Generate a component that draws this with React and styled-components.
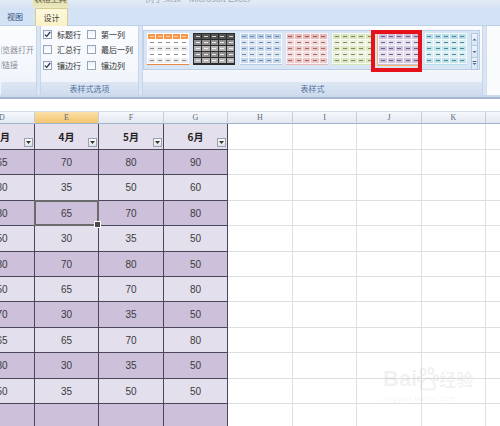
import React from "react";
import styled, { createGlobalStyle, css } from "styled-components";

const CJK = `"Noto Sans CJK SC", "Noto Sans", sans-serif`;
const LATIN = `"Liberation Sans", "Noto Sans CJK SC", sans-serif`;

const GlobalStyle = createGlobalStyle`
  html, body { margin: 0; padding: 0; background: #ffffff; }
  body { font-family: ${CJK}; }
  * { box-sizing: border-box; }
`;

const Page = styled.div`
  position: relative;
  width: 500px;
  height: 426px;
  overflow: hidden;
  display: flex;
  flex-direction: column;
  background: #ffffff;
`;

/* ---------- title bar + tabs ---------- */
const TitleBar = styled.div`
  flex: none;
  height: 8px;
  display: flex;
  overflow: hidden;
  background: linear-gradient(#e3ecf7, #d6e3f3);
`;

const ContextHead = styled.div`
  flex: none;
  margin-left: 33px;
  width: 35px;
  background: linear-gradient(#e2ddac, #eee8bf);
  color: #5a5946;
  font-size: 8px;
  line-height: 8px;
  text-align: center;
  white-space: nowrap;
  span {
    display: block;
    margin-top: -5px;
  }
`;

const TitleText = styled.div`
  margin: -5px 0 0 77px;
  font-family: ${LATIN};
  font-size: 9px;
  line-height: 9px;
  color: #9aa5b3;
  white-space: nowrap;
`;

const TabRow = styled.div`
  flex: none;
  height: 17px;
  display: flex;
  align-items: flex-end;
  gap: 5px;
  background: #d3e2f5;
`;

const Tab = styled.div`
  width: ${(p) => p.$w}px;
  height: 17px;
  font-size: 8px;
  line-height: 17px;
  text-align: center;
  color: #2f4d7c;
  ${(p) =>
    p.$active &&
    css`
      position: relative;
      z-index: 1;
      height: 18px;
      margin-bottom: -1px;
      color: #3a3a3a;
      background: linear-gradient(#fdf8dc, #faf1c9);
      border: 1px solid #d6cb95;
      border-bottom: none;
      border-radius: 2px 2px 0 0;
    `}
`;

/* ---------- ribbon ---------- */
const Ribbon = styled.div`
  flex: none;
  height: 70px;
  display: flex;
  gap: 3px;
  background: #d9e5f4;
  border-top: 1px solid #bcd0e8;
`;

const Group = styled.div`
  flex: none;
  width: ${(p) => p.$w}px;
  display: flex;
  flex-direction: column;
  overflow: hidden;
  background: linear-gradient(#fbfcfe, #eef3fa);
  border-left: 1px solid ${(p) => (p.$open ? "transparent" : "#c6d6ea")};
  border-right: 1px solid #c6d6ea;
`;

const GroupBody = styled.div`
  flex: 1;
  min-height: 0;
`;

const GroupLabel = styled.div`
  flex: none;
  height: 13px;
  font-size: 8px;
  line-height: 13px;
  text-align: center;
  color: #51709d;
  background: linear-gradient(#dde7f4, #cfdcee);
`;

const LinkList = styled.div`
  display: grid;
  grid-template-rows: 16px 15px 16px;
  margin-left: -15px;
`;

const LinkItem = styled.div`
  font-size: 8px;
  line-height: 15px;
  white-space: nowrap;
  color: #8a8e95;
`;

const OptionGrid = styled.div`
  display: grid;
  grid-template-columns: 44px 1fr;
  grid-template-rows: 16px 15px 16px;
  padding-left: 2px;
`;

const Option = styled.label`
  display: flex;
  align-items: center;
  gap: 5px;
  font-size: 8px;
  color: #2e2e2e;
  white-space: nowrap;
`;

const Box = styled.span`
  flex: none;
  width: 9px;
  height: 9px;
  display: flex;
  align-items: center;
  justify-content: center;
  border: 1px solid #93a4bb;
  background: linear-gradient(#eef2f7, #ffffff);
`;

const Check = () => (
  <svg width="7" height="7" viewBox="0 0 7 7">
    <path d="M0.8 3.6 L2.7 5.4 L6.2 1" fill="none" stroke="#2a3550" strokeWidth="1.3" />
  </svg>
);

const StyleBody = styled(GroupBody)`
  padding: 4px 0 0 0;
`;

const Gallery = styled.div`
  width: 337px;
  height: 40px;
  display: flex;
  align-items: flex-start;
  gap: 4.3px;
  padding: 2px 1px 0 3px;
  background: #d8e5f5;
  border: 1px solid #bccfe6;
`;

const Thumb = styled.div`
  flex: none;
  width: 42px;
  height: 32px;
  display: grid;
  grid-template-columns: repeat(5, 1fr);
  grid-template-rows: repeat(5, 1fr);
  gap: 1px;
  padding: 1px;
  background: ${(p) => p.$t.line};
  border-bottom: 1px solid ${(p) => p.$t.frame};
  ${(p) =>
    p.$picked &&
    css`
      outline: 1px solid #f4b860;
    `}
`;

const ThumbCell = styled.div`
  display: flex;
  align-items: center;
  justify-content: center;
  background: ${(p) => p.$bg};
  &::after {
    content: "";
    width: 4px;
    height: 1.5px;
    background: ${(p) => p.$dash};
  }
`;

const Slot = styled.div`
  position: relative;
  flex: none;
`;

const Picked = styled.div`
  position: absolute;
  top: -3px;
  bottom: -7px;
  left: -7px;
  right: -2px;
  border: 4px solid #e5121b;
`;

const ScrollCol = styled.div`
  margin-left: auto;
  width: 9px;
  height: 37px;
  display: flex;
  flex-direction: column;
`;

const ScrollBtn = styled.div`
  flex: 1;
  display: flex;
  align-items: center;
  justify-content: center;
  background: linear-gradient(#eef3fa, #d8e4f3);
  border: 1px solid #b4c7df;
  & + & {
    border-top: none;
  }
`;

const Tail = styled.div`
  flex: 1;
  background: #fafbfd;
  border-left: 1px solid #d2deec;
`;

const RibbonEdge = styled.div`
  flex: none;
  height: 4px;
  background: linear-gradient(#cbd9eb 0 50%, #a2b7d1 50% 100%);
`;

const FormulaGap = styled.div`
  flex: none;
  height: 13px;
  background: #ffffff;
  border-bottom: 1px solid #d3dce8;
`;

/* ---------- sheet ---------- */
const SheetView = styled.div`
  flex: 1;
  overflow: hidden;
`;

const SheetGrid = styled.div`
  display: grid;
  margin-left: -30px;
  grid-template-columns: 65px 64px 65px 64px 65px 64px 65px 64px 65px;
  grid-template-rows: 12px 26px 25px 26px 25px 26px 25px 25px 26px 25px 26px 25px 25px;
`;

const ColHead = styled.div`
  display: flex;
  align-items: center;
  justify-content: center;
  font-family: "Liberation Serif", serif;
  font-size: 8px;
  color: #5e6b7b;
  border-right: 1px solid #c4cfdd;
  border-bottom: 1px solid #9fb2ca;
  background: ${(p) =>
    p.$active ? "linear-gradient(#fae0a8, #f3c46e)" : "linear-gradient(#f5f7fb, #e3e9f1)"};
`;

const Cell = styled.div`
  position: relative;
  display: flex;
  align-items: center;
  justify-content: center;
  font-family: ${LATIN};
  font-size: 10px;
  color: #3b3b3b;
  background: ${(p) => p.$bg || "#ffffff"};
  border-right: 1px solid ${(p) => (p.$table ? "#4a4759" : "#dcdfe4")};
  border-bottom: 1px solid ${(p) => (p.$table ? "#4a4759" : "#dcdfe4")};
  ${(p) =>
    p.$selected &&
    css`
      z-index: 2;
      &::before {
        content: "";
        position: absolute;
        top: -1px;
        left: -1px;
        right: -1px;
        bottom: -1px;
        border: 2px solid #6b6b6b;
      }
      &::after {
        content: "";
        position: absolute;
        right: -3px;
        bottom: -3px;
        width: 5px;
        height: 5px;
        background: #4a4a4a;
        border: 1px solid #ffffff;
      }
    `}
`;

const MonthCell = styled(Cell)`
  font-family: ${CJK};
  font-weight: 700;
  font-size: 10px;
  color: #1e1e1e;
  padding-bottom: 1px;
`;

const DropBtn = styled.span`
  position: absolute;
  right: 1px;
  bottom: 2px;
  width: 9px;
  height: 9px;
  display: flex;
  align-items: center;
  justify-content: center;
  border: 1px solid #98a2b0;
  background: linear-gradient(#fdfdfd, #dde2e8);
`;

const Watermark = styled.div`
  position: absolute;
  left: 383px;
  top: 364px;
  display: flex;
  flex-direction: column;
  color: rgba(150, 150, 150, 0.13);
  pointer-events: none;
`;

const MarkTop = styled.div`
  display: flex;
  align-items: center;
  font-family: ${LATIN};
  font-size: 22px;
  font-weight: 700;
  line-height: 30px;
  span:last-child {
    font-family: ${CJK};
    font-size: 17px;
  }
`;

const MarkSub = styled.div`
  font-family: ${LATIN};
  font-size: 8px;
  letter-spacing: 0.5px;
`;

const themes = {
  orange: { line: "#ffffff", head: "#f79646", headDash: "#fcd5b4", a: "#ffffff", b: "#ececec", dash: "#8d8d8d", frame: "#e98a3a" },
  dark: { line: "#2c2c2c", head: "#555555", headDash: "#d6d6d6", a: "#8f8f8f", b: "#b3b3b3", dash: "#efefef", frame: "#2c2c2c" },
  blue: { line: "#f3f7fc", head: "#b8cce4", headDash: "#6e8ab0", a: "#dce6f1", b: "#c7d7eb", dash: "#6e8ab0", frame: "#b8cce4" },
  red: { line: "#fbf3f3", head: "#e6b8b7", headDash: "#9c5a58", a: "#f2dcdb", b: "#eac6c5", dash: "#a36866", frame: "#e6b8b7" },
  green: { line: "#f8fbf2", head: "#d8e4bc", headDash: "#7c8c55", a: "#ebf1de", b: "#dbe6c2", dash: "#7f8f5a", frame: "#d8e4bc" },
  purple: { line: "#f6f4f9", head: "#ccc0da", headDash: "#6e5c8a", a: "#e4dfec", b: "#cfc4dd", dash: "#6e5c8a", frame: "#ccc0da" },
  teal: { line: "#f3fafc", head: "#b7dee8", headDash: "#4f8898", a: "#daeef3", b: "#bfe2eb", dash: "#4f8898", frame: "#b7dee8" },
};

const StyleThumb = ({ theme, picked }) => {
  const t = themes[theme];
  const cells = [];
  for (let i = 0; i < 25; i++) {
    const r = Math.floor(i / 5);
    const bg = r === 0 ? t.head : r % 2 ? t.a : t.b;
    cells.push(<ThumbCell key={i} $bg={bg} $dash={r === 0 ? t.headDash : t.dash} />);
  }
  return (
    <Slot>
      <Thumb $t={t} $picked={picked}>
        {cells}
      </Thumb>
      {picked && <Picked />}
    </Slot>
  );
};

const Arrow = ({ up, bar }) => (
  <svg width="5" height="5" viewBox="0 0 5 5">
    {bar && <rect x="0.5" y="0" width="4" height="1" fill="#4c6a94" />}
    <path d={up ? "M0.5 3.5 L2.5 1.5 L4.5 3.5 Z" : "M0.5 2 L2.5 4 L4.5 2 Z"} fill="#4c6a94" />
  </svg>
);

const Caret = () => (
  <svg width="5" height="3" viewBox="0 0 5 3">
    <path d="M0 0 L5 0 L2.5 3 Z" fill="#333" />
  </svg>
);

const months = ["3月", "4月", "5月", "6月"];
const rows = [
  [65, 70, 80, 90],
  [30, 35, 50, 60],
  [80, 65, 70, 80],
  [50, 30, 35, 50],
  [80, 70, 80, 50],
  [50, 65, 70, 80],
  [70, 30, 35, 50],
  [65, 65, 70, 80],
  [80, 30, 35, 50],
  [50, 35, 50, 50],
  ["", "", "", ""],
];
const letters = ["D", "E", "F", "G", "H", "I", "J", "K", "L"];
const blanks = 5;

const App = () => {
  return (
    <Page>
      <GlobalStyle />
      <TitleBar>
        <ContextHead>
          <span>表格工具</span>
        </ContextHead>
        <TitleText>例子.xlsx - Microsoft Excel</TitleText>
      </TitleBar>

      <TabRow>
        <Tab $w={30}>视图</Tab>
        <Tab $w={33} $active>
          设计
        </Tab>
      </TabRow>

      <Ribbon>
        <Group $w={37} $open>
          <GroupBody>
            <LinkList>
              <LinkItem />
              <LinkItem>用浏览器打开</LinkItem>
              <LinkItem>取消链接</LinkItem>
            </LinkList>
          </GroupBody>
          <GroupLabel />
        </Group>

        <Group $w={99}>
          <GroupBody>
            <OptionGrid>
              <Option>
                <Box>
                  <Check />
                </Box>
                标题行
              </Option>
              <Option>
                <Box />
                第一列
              </Option>
              <Option>
                <Box />
                汇总行
              </Option>
              <Option>
                <Box />
                最后一列
              </Option>
              <Option>
                <Box>
                  <Check />
                </Box>
                镶边行
              </Option>
              <Option>
                <Box />
                镶边列
              </Option>
            </OptionGrid>
          </GroupBody>
          <GroupLabel>表样式选项</GroupLabel>
        </Group>

        <Group $w={341}>
          <StyleBody>
            <Gallery>
              {["orange", "dark", "blue", "red", "green", "purple", "teal"].map((k) => (
                <StyleThumb key={k} theme={k} picked={k === "purple"} />
              ))}
              <ScrollCol>
                <ScrollBtn>
                  <Arrow up />
                </ScrollBtn>
                <ScrollBtn>
                  <Arrow />
                </ScrollBtn>
                <ScrollBtn>
                  <Arrow bar />
                </ScrollBtn>
              </ScrollCol>
            </Gallery>
          </StyleBody>
          <GroupLabel>表样式</GroupLabel>
        </Group>
        <Tail />
      </Ribbon>
      <RibbonEdge />
      <FormulaGap />

      <SheetView>
        <SheetGrid>
          {letters.map((l) => (
            <ColHead key={l} $active={l === "E"}>
              {l}
            </ColHead>
          ))}

          {months.map((m) => (
            <MonthCell key={m} $table $bg="#e4dfec">
              {m}
              <DropBtn>
                <Caret />
              </DropBtn>
            </MonthCell>
          ))}
          {Array.from({ length: blanks }, (_, i) => (
            <Cell key={"hb" + i} />
          ))}

          {rows.map((r, ri) => (
            <React.Fragment key={ri}>
              {r.map((v, ci) => (
                <Cell
                  key={ci}
                  $table
                  $bg={ri % 2 === 0 ? "#ccc0da" : "#e4dfec"}
                  $selected={ri === 2 && ci === 1}
                >
                  {v}
                </Cell>
              ))}
              {Array.from({ length: blanks }, (_, i) => (
                <Cell key={"b" + i} />
              ))}
            </React.Fragment>
          ))}
        </SheetGrid>
      </SheetView>

      <Watermark>
        <MarkTop>
          <span>Bai</span>
          <svg width="22" height="24" viewBox="0 0 22 24">
            <g fill="none" stroke="currentColor" strokeWidth="2">
              <ellipse cx="6" cy="5" rx="2.5" ry="3" />
              <ellipse cx="14" cy="4" rx="2.5" ry="3" />
              <ellipse cx="2.5" cy="12" rx="2" ry="2.5" />
              <ellipse cx="19" cy="11" rx="2" ry="2.5" />
              <path d="M4 21 C4 14 9 11 11 11 C14 11 18 15 18 21 C18 23 4 23 4 21 Z" />
            </g>
          </svg>
          <span>经验</span>
        </MarkTop>
        <MarkSub>jingyan.baidu.com</MarkSub>
      </Watermark>
    </Page>
  );
};

export default App;
